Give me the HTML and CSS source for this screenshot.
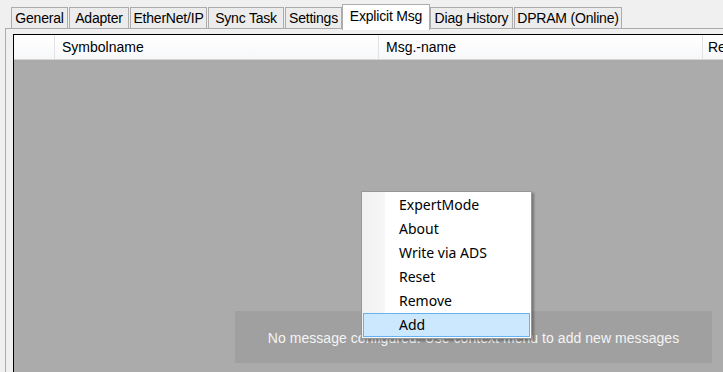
FILE: index.html
```html
<!DOCTYPE html>
<html lang="en">
<head>
  <meta charset="UTF-8">
  <title>Explicit Msg</title>
  <link rel="stylesheet" href="styles.css">
</head>
<body>
  <!-- Tab strip -->
  <div class="tabs">
    <div class="tab tab-general">General</div>
    <div class="tab tab-adapter">Adapter</div>
    <div class="tab tab-eip">EtherNet/IP</div>
    <div class="tab tab-sync">Sync Task</div>
    <div class="tab tab-settings">Settings</div>
    <div class="tab tab-msg active">Explicit Msg</div>
    <div class="tab tab-diag">Diag History</div>
    <div class="tab tab-dpram">DPRAM (Online)</div>
  </div>

  <div class="panel">
    <div class="grid">
      <div class="grid-head">
        <div class="cell row-head"></div>
        <div class="cell col">Symbolname</div>
        <div class="cell col">Msg.-name</div>
        <div class="cell col last">Re</div>
      </div>
      <div class="grid-body"></div>
    </div>
  </div>

  <div class="empty-note">No message configured. Use context menu to add new messages</div>

  <!-- Context menu -->
  <ul class="menu">
    <li>ExpertMode</li>
    <li>About</li>
    <li>Write via ADS</li>
    <li>Reset</li>
    <li>Remove</li>
    <li class="hot">Add</li>
  </ul>
</body>
</html>
```

FILE: styles.css
```css
/* Window */
body {
  margin: 0;
  width: 723px;
  height: 372px;
  overflow: hidden;
  background-color: #f0f0f0;
  font-family: "Liberation Sans", Arial, sans-serif;
  font-size: 14px;
  color: #000;
}

/* Tabs */
.tabs {
  display: flex;
  align-items: flex-end;
  height: 28px;
  padding-left: 11px;
  position: relative;
  z-index: 1;
}
.tab {
  box-sizing: border-box;
  flex: none;
  height: 21px;
  line-height: 21px;
  margin-right: 1px;
  text-align: center;
  background-color: #ececec;
  border: 1px solid #acacac;
  border-bottom: none;
  white-space: nowrap;
  letter-spacing: -0.2px;
}
.tab-general { width: 57px; }
.tab-adapter { width: 60px; }
.tab-eip { width: 77px; }
.tab-sync { width: 76px; }
.tab-settings { width: 57px; }
.tab-diag { width: 83px; }
.tab-dpram { width: 108px; }
.tab.active {
  width: 88px;
  height: 26px;
  line-height: 22px;
  margin: 0 0 -2px -1px;
  background-color: #fff;
}

/* Panel and grid */
.panel {
  margin-left: 5px;
  height: 343px;
  border-top: 1px solid #acacac;
  border-left: 1px solid #acacac;
  padding: 5px 0 0 7px;
}
.grid {
  height: 338px;
  border-top: 1px solid #000;
  border-left: 1px solid #000;
  display: flex;
  flex-direction: column;
}
.grid-head {
  display: flex;
  height: 24px;
  background: linear-gradient(#fff, #f7f8fa);
  border-bottom: 1px solid #d5d5d5;
}
.cell {
  height: 24px;
  line-height: 25px;
  border-right: 1px solid #e3e3e3;
  white-space: nowrap;
  overflow: hidden;
}
.row-head {
  width: 40px;
  flex: none;
}
.col {
  width: 316px;
  flex: none;
  padding-left: 7px;
}
.col.last {
  width: 20px;
  padding-left: 5px;
  border-right: none;
}
.grid-body {
  flex: 1;
  background-color: #ababab;
}

/* Overlays */
.empty-note {
  position: absolute;
  left: 235px;
  top: 311px;
  width: 477px;
  height: 52px;
  line-height: 54px;
  text-align: center;
  background-color: #a0a0a0;
  color: #f4f4f4;
  font-size: 14px;
  letter-spacing: 0.05px;
}
.menu {
  position: absolute;
  left: 361px;
  top: 191px;
  width: 167px;
  margin: 0;
  padding: 1px;
  list-style: none;
  border: 1px solid #979797;
  background: linear-gradient(90deg, #f1f1f1 0, #f7f7f7 23px, #fff 23px);
  box-shadow: 2px 2px 2px rgba(0, 0, 0, 0.3);
  font-family: "Noto Sans", "Open Sans", sans-serif;
  font-size: 14px;
}
.menu li {
  box-sizing: border-box;
  height: 24px;
  line-height: 22px;
  padding-left: 35px;
  border: 1px solid transparent;
}
.menu li.hot {
  background-color: #cce8ff;
  border-color: #66b2f0;
}
```
